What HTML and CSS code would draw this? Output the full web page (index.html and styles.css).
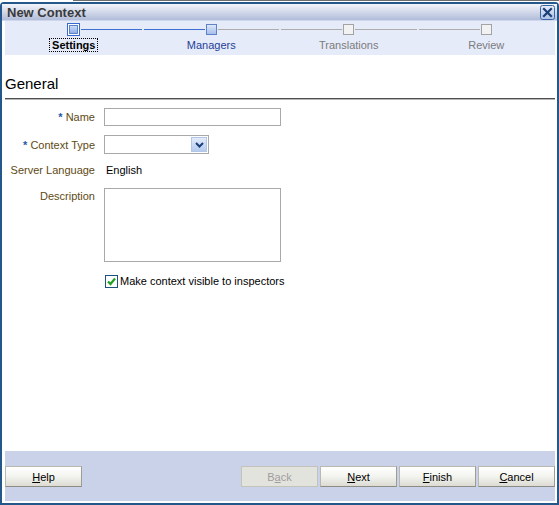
FILE: index.html
```html
<!DOCTYPE html>
<html lang="en">
<head>
  <meta charset="UTF-8" />
  <title>New Context</title>
  <link rel="stylesheet" href="styles.css">
</head>
<body>
  <div class="behind"></div>

  <div class="dialog">
    <div class="titlebar">
      <span class="title">New Context</span>
      <span class="close">
        <svg width="15" height="15" viewBox="0 0 15 15">
          <defs>
            <linearGradient id="cg" x1="0" y1="0" x2="0" y2="1">
              <stop offset="0" stop-color="#e8eef9"/>
              <stop offset="1" stop-color="#a9c0e4"/>
            </linearGradient>
          </defs>
          <rect x="0.5" y="0.5" width="14" height="14" rx="2" fill="url(#cg)" stroke="#3b66a3"/>
          <path d="M4 4 L11 11 M11 4 L4 11" stroke="#1b3d78" stroke-width="2.2" stroke-linecap="square"/>
        </svg>
      </span>
    </div>

    <div class="body">
      <div class="train">
        <div class="stop">
          <div class="track">
            <span class="line none"></span>
            <span class="sq current"><i></i></span>
            <span class="line blue"></span>
          </div>
          <div class="label"><span class="focus">Settings</span></div>
        </div>
        <div class="stop">
          <div class="track">
            <span class="line blue"></span>
            <span class="sq visited"></span>
            <span class="line gray"></span>
          </div>
          <div class="label enabled">Managers</div>
        </div>
        <div class="stop">
          <div class="track">
            <span class="line gray"></span>
            <span class="sq off"></span>
            <span class="line gray"></span>
          </div>
          <div class="label off">Translations</div>
        </div>
        <div class="stop">
          <div class="track">
            <span class="line gray"></span>
            <span class="sq off"></span>
            <span class="line none"></span>
          </div>
          <div class="label off">Review</div>
        </div>
      </div>

      <div class="content">
        <h2>General</h2>

        <div class="form">
          <div class="row r-name">
            <label><span class="req">*</span> Name</label>
            <span class="input"></span>
          </div>
          <div class="row r-type">
            <label><span class="req">*</span> Context Type</label>
            <span class="select">
              <span class="drop">
                <svg width="9" height="6" viewBox="0 0 9 6"><path d="M1 1 L4.5 4.5 L8 1" fill="none" stroke="#1d3d7c" stroke-width="2"/></svg>
              </span>
            </span>
          </div>
          <div class="row r-lang">
            <label>Server Language</label>
            <span class="value">English</span>
          </div>
          <div class="row r-desc">
            <label>Description</label>
            <span class="textarea"></span>
          </div>
          <div class="row r-check">
            <label></label>
            <span class="checkbox">
              <svg width="11" height="11" viewBox="0 0 11 11"><path d="M2 5.5 L4.5 8 L9 2.5" fill="none" stroke="#22a022" stroke-width="2.2"/></svg>
            </span>
            <span class="check-text">Make context visible to inspectors</span>
          </div>
        </div>
      </div>

      <div class="footer">
        <button class="btn"><u>H</u>elp</button>
        <span class="spacer"></span>
        <button class="btn disabled">B<u>a</u>ck</button>
        <button class="btn"><u>N</u>ext</button>
        <button class="btn"><u>F</u>inish</button>
        <button class="btn"><u>C</u>ancel</button>
      </div>
    </div>
  </div>
</body>
</html>
```

FILE: styles.css
```css
body {
  margin: 0;
  background: #fff;
  font-family: "Liberation Sans", Arial, sans-serif;
  font-size: 11px;
  color: #000;
  width: 559px;
  height: 505px;
  overflow: hidden;
}

.behind {
  height: 1px;
  margin: 0 0 1px 73px;
  background: #6d6d6d;
}

.dialog {
  height: 503px;
  box-sizing: border-box;
  border: 2px solid #24578a;
  border-radius: 4px 4px 0 0;
  display: flex;
  flex-direction: column;
}

.titlebar {
  height: 16px;
  display: flex;
  align-items: center;
  padding: 0 2px 0 5px;
  background: linear-gradient(#f2f4f9, #b1bcda);
  border-bottom: 1px solid #cfd7ec;
}

.title {
  flex: 1;
  font-size: 13px;
  font-weight: bold;
  color: #3a3a3a;
}

.close {
  width: 15px;
  height: 15px;
  display: flex;
}

.body {
  flex: 1;
  display: flex;
  flex-direction: column;
  padding: 0 2px 2px 3px;
}

/* train */
.train {
  display: flex;
  background: #e6ebfa;
  padding: 2px 0 3px;
}

.stop {
  flex: 1;
}

.track {
  display: flex;
  align-items: center;
  height: 13px;
}

.line {
  flex: 1;
  height: 1px;
  margin: 0 1px;
}

.line.blue { background: #3d6fd0; }
.line.gray { background: #adadad; }
.line.none { background: transparent; }

.sq {
  box-sizing: border-box;
  display: flex;
  align-items: center;
  justify-content: center;
}

.sq.current {
  width: 13px;
  height: 13px;
  border: 1px solid #3a6acb;
  background: #fff;
}

.sq.current i {
  width: 9px;
  height: 9px;
  box-sizing: border-box;
  border: 1px solid #5c84cc;
  background: linear-gradient(#cddcf6, #8eafe5);
}

.sq.visited {
  width: 11px;
  height: 11px;
  border: 1px solid #5f82c6;
  background: linear-gradient(#dce7f9, #a6bfea);
}

.sq.off {
  width: 11px;
  height: 11px;
  border: 1px solid #a3a3a3;
  background: #f2f2f2;
}

.label {
  margin-top: 2px;
  line-height: 14px;
  text-align: center;
}

.focus {
  font-weight: bold;
  border: 1px dotted #000;
  padding: 0 2px;
}

.label.enabled { color: #1f3f96; }
.label.off { color: #7b7b7b; }

/* content */
.content {
  flex: 1;
}

.content h2 {
  margin: 20px 0 0;
  font-size: 15px;
  font-weight: normal;
  line-height: 18px;
  padding-bottom: 5px;
  border-bottom: 1px solid #4f4f4f;
  box-shadow: 0 1px 0 #b5b5b5;
}

.form {
  padding-top: 9px;
}

.row {
  display: flex;
  align-items: center;
}

.row label {
  width: 90px;
  margin-right: 9px;
  text-align: right;
  color: #5e4a14;
  flex-shrink: 0;
}

.req {
  color: #1d5aa6;
  font-weight: bold;
}

.r-name { height: 18px; margin-bottom: 9px; }
.r-type { height: 19px; margin-bottom: 7px; }
.r-lang { height: 18px; margin-bottom: 9px; }
.r-desc { height: 74px; margin-bottom: 12px; align-items: flex-start; }
.r-desc label { line-height: 14px; padding-top: 1px; }
.r-check { height: 14px; }

.input {
  width: 177px;
  height: 18px;
  box-sizing: border-box;
  border: 1px solid #a9a9a9;
}

.select {
  width: 105px;
  height: 19px;
  box-sizing: border-box;
  border: 1px solid #a9a9a9;
  display: flex;
  justify-content: flex-end;
  padding: 1px;
}

.drop {
  width: 16px;
  height: 15px;
  box-sizing: border-box;
  border: 1px solid #b4c6e6;
  background: linear-gradient(#e3ecfa, #b5cbee);
  display: flex;
  align-items: center;
  justify-content: center;
}

.value {
  padding-left: 2px;
}

.textarea {
  width: 177px;
  height: 74px;
  box-sizing: border-box;
  border: 1px solid #a9a9a9;
}

.checkbox {
  width: 13px;
  height: 13px;
  box-sizing: border-box;
  border: 1px solid #1c5180;
  background: #fff;
  margin-left: 1px;
  display: flex;
  align-items: center;
  justify-content: center;
}

.check-text {
  margin-left: 2px;
}

/* buttons */
.footer {
  height: 50px;
  box-sizing: border-box;
  padding-top: 15px;
  background: #cad2ea;
  display: flex;
  gap: 2px;
  align-items: flex-start;
}

.spacer {
  flex: 1;
}

.btn {
  width: 77px;
  height: 21px;
  margin: 0;
  padding: 0;
  font-family: "Liberation Sans", Arial, sans-serif;
  font-size: 11px;
  color: #000;
  border: 1px solid #b9b9b1;
  border-bottom-color: #8c8c84;
  border-right-color: #9c9c94;
  background: linear-gradient(#ffffff, #f3f3ef 50%, #dcdcd4);
}

.btn.disabled {
  color: #9e9e9e;
  background: #e3e3dd;
  border-color: #c3c3bc;
}
```
